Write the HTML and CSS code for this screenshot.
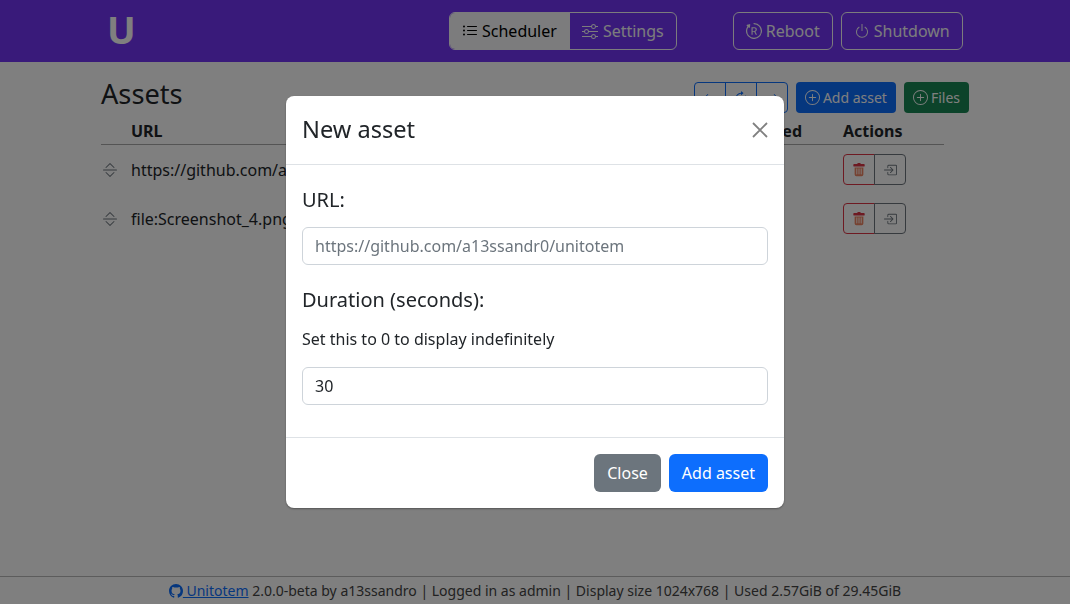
FILE: index.html
```html
<!DOCTYPE html>
<html lang="en">
<head>
<meta charset="utf-8">
<title>Unitotem</title>
<link rel="stylesheet" href="styles.css">
</head>
<body>
<nav class="navbar">
  <span class="logo">U</span>
  <div class="tabs">
    <a class="tab tab-active"><svg class="icon" viewBox="0 0 16 16"><path fill-rule="evenodd" d="M5 11.5a.5.5 0 0 1 .5-.5h9a.5.5 0 0 1 0 1h-9a.5.5 0 0 1-.5-.5zm0-4a.5.5 0 0 1 .5-.5h9a.5.5 0 0 1 0 1h-9a.5.5 0 0 1-.5-.5zm0-4a.5.5 0 0 1 .5-.5h9a.5.5 0 0 1 0 1h-9a.5.5 0 0 1-.5-.5zm-3 1a1 1 0 1 0 0-2 1 1 0 0 0 0 2zm0 4a1 1 0 1 0 0-2 1 1 0 0 0 0 2zm0 4a1 1 0 1 0 0-2 1 1 0 0 0 0 2z"/></svg>Scheduler</a>
    <a class="tab"><svg class="icon" viewBox="0 0 16 16"><path fill-rule="evenodd" d="M11.5 2a1.5 1.5 0 1 0 0 3 1.5 1.5 0 0 0 0-3zM9.05 3a2.5 2.5 0 0 1 4.9 0H16v1h-2.05a2.5 2.5 0 0 1-4.9 0H0V3h9.05zM4.5 7a1.5 1.5 0 1 0 0 3 1.5 1.5 0 0 0 0-3zM2.05 8a2.5 2.5 0 0 1 4.9 0H16v1H6.95a2.5 2.5 0 0 1-4.9 0H0V8h2.05zm9.45 4a1.5 1.5 0 1 0 0 3 1.5 1.5 0 0 0 0-3zm-2.45 1a2.5 2.5 0 0 1 4.9 0H16v1h-2.05a2.5 2.5 0 0 1-4.9 0H0v-1h9.05z"/></svg>Settings</a>
  </div>
  <div class="power">
    <a class="nav-btn"><svg class="icon" viewBox="0 0 16 16"><path d="M1.161 8a6.84 6.84 0 1 0 6.842-6.84.58.58 0 1 1 0-1.16 8 8 0 1 1-6.556 3.412l-.663-.577a.58.58 0 0 1 .227-.997l2.52-.69a.58.58 0 0 1 .728.633l-.332 2.592a.58.58 0 0 1-.956.364l-.643-.56A6.812 6.812 0 0 0 1.16 8z"/><path d="M6.641 11.671V8.843h1.57l1.498 2.828h1.314L9.377 8.665c.897-.3 1.427-1.106 1.427-2.1 0-1.37-.943-2.246-2.456-2.246H5.5v7.352h1.141zm0-3.75V5.277h1.57c.881 0 1.416.499 1.416 1.32 0 .84-.504 1.324-1.386 1.324h-1.6z"/></svg>Reboot</a>
    <a class="nav-btn"><svg class="icon" viewBox="0 0 16 16"><path d="M7.5 1v7h1V1h-1z"/><path d="M3 8.812a4.999 4.999 0 0 1 2.578-4.375l-.485-.874A6 6 0 1 0 11 3.616l-.501.865A5 5 0 1 1 3 8.812z"/></svg>Shutdown</a>
  </div>
</nav>

<main class="content">
  <header class="page-head">
    <h1 class="page-title">Assets</h1>
    <div class="toolbar">
      <div class="nav-group">
        <button class="group-cell"><svg class="icon" viewBox="0 0 16 16"><path fill-rule="evenodd" d="M15 8a.5.5 0 0 0-.5-.5H2.707l3.147-3.146a.5.5 0 1 0-.708-.708l-4 4a.5.5 0 0 0 0 .708l4 4a.5.5 0 0 0 .708-.708L2.707 8.5H14.5A.5.5 0 0 0 15 8z"/></svg></button>
        <button class="group-cell"><svg class="icon" viewBox="0 0 16 16"><path fill-rule="evenodd" d="M8 3a5 5 0 1 0 4.546 2.914.5.5 0 0 1 .908-.417A6 6 0 1 1 8 2v1z"/><path d="M8 4.466V.534a.25.25 0 0 1 .41-.192l2.36 1.966c.12.1.12.284 0 .384L8.41 4.658A.25.25 0 0 1 8 4.466z"/></svg></button>
        <button class="group-cell"><svg class="icon" viewBox="0 0 16 16"><path fill-rule="evenodd" d="M1 8a.5.5 0 0 1 .5-.5h11.793l-3.147-3.146a.5.5 0 0 1 .708-.708l4 4a.5.5 0 0 1 0 .708l-4 4a.5.5 0 0 1-.708-.708L13.293 8.5H1.5A.5.5 0 0 1 1 8z"/></svg></button>
      </div>
      <a class="solid-btn solid-blue"><svg class="icon" viewBox="0 0 16 16"><path d="M8 15A7 7 0 1 1 8 1a7 7 0 0 1 0 14zm0 1A8 8 0 1 0 8 0a8 8 0 0 0 0 16z"/><path d="M8 4a.5.5 0 0 1 .5.5v3h3a.5.5 0 0 1 0 1h-3v3a.5.5 0 0 1-1 0v-3h-3a.5.5 0 0 1 0-1h3v-3A.5.5 0 0 1 8 4z"/></svg>Add asset</a>
      <a class="solid-btn solid-green"><svg class="icon" viewBox="0 0 16 16"><path d="M8 15A7 7 0 1 1 8 1a7 7 0 0 1 0 14zm0 1A8 8 0 1 0 8 0a8 8 0 0 0 0 16z"/><path d="M8 4a.5.5 0 0 1 .5.5v3h3a.5.5 0 0 1 0 1h-3v3a.5.5 0 0 1-1 0v-3h-3a.5.5 0 0 1 0-1h3v-3A.5.5 0 0 1 8 4z"/></svg>Files</a>
    </div>
  </header>

  <section class="asset-table">
    <div class="asset-row asset-head">
      <span></span><span>URL</span><span class="col-state">Enabled</span><span>Actions</span>
    </div>
    <div class="asset-row">
      <svg class="icon handle" viewBox="0 0 16 16"><path fill-rule="evenodd" d="M3.646 10.146a.5.5 0 0 1 .708 0L8 13.793l3.646-3.647a.5.5 0 0 1 .708.708l-4 4a.5.5 0 0 1-.708 0l-4-4a.5.5 0 0 1 0-.708zm0-4.292a.5.5 0 0 0 .708 0L8 2.207l3.646 3.647a.5.5 0 0 0 .708-.708l-4-4a.5.5 0 0 0-.708 0l-4 4a.5.5 0 0 0 0 .708zM1 8a.5.5 0 0 1 .5-.5h13a.5.5 0 0 1 0 1h-13A.5.5 0 0 1 1 8z"/></svg>
      <span>https://github.com/a13ssandr0/unitotem</span><span></span>
      <div class="actions">
        <button class="action action-del"><svg class="icon" viewBox="0 0 16 16"><path d="M2.5 1a1 1 0 0 0-1 1v1a1 1 0 0 0 1 1h11a1 1 0 0 0 1-1V2a1 1 0 0 0-1-1H10a1 1 0 0 0-1-1H7a1 1 0 0 0-1 1H2.5z"/><path class="trash-body" d="M3 5v8a2 2 0 0 0 2 2h6a2 2 0 0 0 2-2V5H3zm2.5 1a.5.5 0 0 1 .5.5v6a.5.5 0 0 1-1 0v-6a.5.5 0 0 1 .5-.5zM8 6a.5.5 0 0 1 .5.5v6a.5.5 0 0 1-1 0v-6A.5.5 0 0 1 8 6zm3 .5v6a.5.5 0 0 1-1 0v-6a.5.5 0 0 1 1 0z"/></svg></button>
        <button class="action action-go"><svg class="icon" viewBox="0 0 16 16"><path fill-rule="evenodd" d="M6 3.5a.5.5 0 0 1 .5-.5h8a.5.5 0 0 1 .5.5v9a.5.5 0 0 1-.5.5h-8a.5.5 0 0 1-.5-.5v-2a.5.5 0 0 0-1 0v2A1.5 1.5 0 0 0 6.5 14h8a1.5 1.5 0 0 0 1.5-1.5v-9A1.5 1.5 0 0 0 14.5 2h-8A1.5 1.5 0 0 0 5 3.5v2a.5.5 0 0 0 1 0v-2z"/><path fill-rule="evenodd" d="M11.854 8.354a.5.5 0 0 0 0-.708l-3-3a.5.5 0 1 0-.708.708L10.293 7.5H1.5a.5.5 0 0 0 0 1h8.793l-2.147 2.146a.5.5 0 0 0 .708.708l3-3z"/></svg></button>
      </div>
    </div>
    <div class="asset-row">
      <svg class="icon handle" viewBox="0 0 16 16"><path fill-rule="evenodd" d="M3.646 10.146a.5.5 0 0 1 .708 0L8 13.793l3.646-3.647a.5.5 0 0 1 .708.708l-4 4a.5.5 0 0 1-.708 0l-4-4a.5.5 0 0 1 0-.708zm0-4.292a.5.5 0 0 0 .708 0L8 2.207l3.646 3.647a.5.5 0 0 0 .708-.708l-4-4a.5.5 0 0 0-.708 0l-4 4a.5.5 0 0 0 0 .708zM1 8a.5.5 0 0 1 .5-.5h13a.5.5 0 0 1 0 1h-13A.5.5 0 0 1 1 8z"/></svg>
      <span>file:Screenshot_4.png</span><span></span>
      <div class="actions">
        <button class="action action-del"><svg class="icon" viewBox="0 0 16 16"><path d="M2.5 1a1 1 0 0 0-1 1v1a1 1 0 0 0 1 1h11a1 1 0 0 0 1-1V2a1 1 0 0 0-1-1H10a1 1 0 0 0-1-1H7a1 1 0 0 0-1 1H2.5z"/><path class="trash-body" d="M3 5v8a2 2 0 0 0 2 2h6a2 2 0 0 0 2-2V5H3zm2.5 1a.5.5 0 0 1 .5.5v6a.5.5 0 0 1-1 0v-6a.5.5 0 0 1 .5-.5zM8 6a.5.5 0 0 1 .5.5v6a.5.5 0 0 1-1 0v-6A.5.5 0 0 1 8 6zm3 .5v6a.5.5 0 0 1-1 0v-6a.5.5 0 0 1 1 0z"/></svg></button>
        <button class="action action-go"><svg class="icon" viewBox="0 0 16 16"><path fill-rule="evenodd" d="M6 3.5a.5.5 0 0 1 .5-.5h8a.5.5 0 0 1 .5.5v9a.5.5 0 0 1-.5.5h-8a.5.5 0 0 1-.5-.5v-2a.5.5 0 0 0-1 0v2A1.5 1.5 0 0 0 6.5 14h8a1.5 1.5 0 0 0 1.5-1.5v-9A1.5 1.5 0 0 0 14.5 2h-8A1.5 1.5 0 0 0 5 3.5v2a.5.5 0 0 0 1 0v-2z"/><path fill-rule="evenodd" d="M11.854 8.354a.5.5 0 0 0 0-.708l-3-3a.5.5 0 1 0-.708.708L10.293 7.5H1.5a.5.5 0 0 0 0 1h8.793l-2.147 2.146a.5.5 0 0 0 .708.708l3-3z"/></svg></button>
      </div>
    </div>
  </section>
</main>

<footer class="footer">
  <a class="footer-link"><svg class="icon" viewBox="0 0 16 16"><path d="M8 0C3.58 0 0 3.58 0 8c0 3.54 2.29 6.53 5.47 7.59.4.07.55-.17.55-.38 0-.19-.01-.82-.01-1.49-2.01.37-2.53-.49-2.69-.94-.09-.23-.48-.94-.82-1.13-.28-.15-.68-.52-.01-.53.63-.01 1.08.58 1.23.82.72 1.21 1.87.87 2.33.66.07-.52.28-.87.51-1.07-1.78-.2-3.64-.89-3.64-3.95 0-.87.31-1.59.82-2.15-.08-.2-.36-1.02.08-2.12 0 0 .67-.21 2.2.82.64-.18 1.32-.27 2-.27.68 0 1.36.09 2 .27 1.53-1.04 2.2-.82 2.2-.82.44 1.1.16 1.92.08 2.12.51.56.82 1.28.82 2.15 0 3.07-1.87 3.75-3.65 3.95.29.25.54.73.54 1.48 0 1.07-.01 1.93-.01 2.2 0 .21.15.46.55.38A8.013 8.013 0 0 0 16 8c0-4.42-3.58-8-8-8z"/></svg> Unitotem</a> 2.0.0-beta by a13ssandro | Logged in as admin | Display size 1024x768 | Used 2.57GiB of 29.45GiB
</footer>

<div class="backdrop">
  <div class="modal">
    <div class="modal-header">
      <h5 class="modal-title">New asset</h5>
      <svg class="modal-close" viewBox="0 0 16 16"><path d="M1 1l14 14M15 1L1 15"/></svg>
    </div>
    <div class="modal-body">
      <label class="field-label">URL:</label>
      <input class="field-input field-url" type="text" placeholder="https://github.com/a13ssandr0/unitotem">
      <label class="field-label field-label-next">Duration (seconds):</label>
      <p class="field-help">Set this to 0 to display indefinitely</p>
      <input class="field-input" type="text" value="30">
    </div>
    <div class="modal-footer">
      <button class="modal-btn modal-btn-close">Close</button>
      <button class="modal-btn modal-btn-add">Add asset</button>
    </div>
  </div>
</div>
</body>
</html>
```

FILE: styles.css
```css
* { box-sizing: border-box; }

html, body { height: 100%; }

body {
  margin: 0;
  height: 604px;
  display: flex;
  flex-direction: column;
  overflow: hidden;
  background: #fff;
  color: #212529;
  font: 16px/1.5 "Noto Sans", sans-serif;
}

.icon { width: 1em; height: 1em; fill: currentColor; flex: none; }

/* navbar */
.navbar {
  height: 62px;
  flex: none;
  display: flex;
  align-items: center;
  padding-left: 107px;
  background: #7234f5;
  color: #f8f9fa;
}

.logo {
  width: 342px;
  padding-bottom: 4px;
  font-size: 38px;
  font-weight: 700;
  line-height: 1;
  color: #fff;
}

.tabs {
  display: flex;
  height: 38px;
  border: 1px solid #f8f9fa;
  border-radius: 6px;
  overflow: hidden;
}

.tab {
  display: flex;
  align-items: center;
  gap: 5px;
  padding: 0 12px;
  color: #f8f9fa;
}

.tab-active {
  gap: 4px;
  padding: 0 13px 0 12px;
  background: #f8f9fa;
  color: #000;
}

.power { display: flex; gap: 8px; margin-left: 56px; }

.nav-btn {
  display: flex;
  align-items: center;
  gap: 4px;
  height: 38px;
  padding: 0 12px;
  border: 1px solid #f8f9fa;
  border-radius: 6px;
}

/* content */
.content {
  flex: 1;
  padding: 20px 101px 0;
}

.page-head {
  display: flex;
  justify-content: space-between;
  align-items: flex-start;
  height: 37px;
}

.page-title {
  margin: 0;
  font-size: 27.2px;
  font-weight: 400;
  line-height: 24px;
}

.toolbar { display: flex; gap: 8px; font-size: 14px; }

.nav-group {
  display: flex;
  width: 94px;
  height: 31px;
  border: 1px solid #0d6efd;
  border-radius: 4px;
}

.group-cell {
  flex: 1;
  padding: 0;
  border: 0;
  border-left: 1px solid #0d6efd;
  background: none;
  color: #0d6efd;
  font-size: 14px;
  display: flex;
  align-items: center;
  justify-content: center;
}

.group-cell:first-child { border-left: 0; }

.solid-btn {
  display: flex;
  align-items: center;
  gap: 3px;
  height: 31px;
  padding: 0 9px;
  border-radius: 4px;
  color: #fff;
}

.solid-btn .icon { font-size: 15px; }
.solid-blue { background: #0d6efd; }
.solid-green { background: #198754; }

.asset-table { width: 843px; }

.asset-row {
  display: grid;
  grid-template-columns: 30px 1fr auto 101px;
  align-items: center;
  height: 49px;
}

.asset-head {
  height: 26px;
  padding-bottom: 1px;
  font-weight: 700;
  border-bottom: 1px solid #a8a8a8;
}

.col-state { margin-right: 41px; }

.handle { color: #6c757d; margin-left: 1px; }

.actions { display: flex; width: 63px; }

.action {
  width: 32px;
  height: 31px;
  padding: 0;
  background: none;
  border: 1px solid #dc3545;
  border-radius: 4px 0 0 4px;
  color: #dc3545;
  font-size: 14px;
  display: flex;
  align-items: center;
  justify-content: center;
}

.trash-body { fill: #e8663c; opacity: .8; }

.action-go {
  margin-left: -1px;
  border-color: #6c757d;
  border-radius: 0 4px 4px 0;
  color: #6c757d;
}

/* footer */
.footer {
  flex: none;
  height: 28px;
  border-top: 1px solid #b9b9b9;
  text-align: center;
  font-size: 14px;
  line-height: 28px;
  color: #444;
}

.footer-link { color: #0d6efd; text-decoration: underline; }
.footer-link .icon { vertical-align: -2px; }

/* modal */
.backdrop {
  position: fixed;
  inset: 0;
  display: flex;
  justify-content: center;
  align-items: flex-start;
  padding-top: 96px;
  background: rgba(0, 0, 0, .5);
}

.modal {
  width: 498px;
  background: #fff;
  border-radius: 8px;
  box-shadow: 0 1px 2px rgba(0, 0, 0, .35);
}

.modal-header {
  display: flex;
  justify-content: space-between;
  align-items: center;
  height: 69px;
  padding: 0 16px;
  border-bottom: 1px solid #dee2e6;
}

.modal-title {
  margin: 0;
  font-size: 23.6px;
  font-weight: 400;
  line-height: 1.5;
}

.modal-close {
  width: 16px;
  height: 16px;
  fill: none;
  stroke: #808080;
  stroke-width: 1.8;
  overflow: visible;
}

.modal-body {
  padding: 20px 16px 32px;
  display: flex;
  flex-direction: column;
}

.field-label { font-size: 20px; line-height: 30px; margin-bottom: 12px; }
.field-label-next { margin-top: 20px; }
.field-help { margin: 0 0 16px; line-height: 24px; }

.field-input {
  width: 100%;
  height: 38px;
  padding: 6px 12px;
  border: 1px solid #ced4da;
  border-radius: 6px;
  font: inherit;
  color: #212529;
  outline: none;
}

.field-input::placeholder { color: #6c757d; opacity: 1; }

.modal-footer {
  display: flex;
  justify-content: flex-end;
  gap: 8px;
  padding: 16px;
  border-top: 1px solid #dee2e6;
}

.modal-btn {
  height: 38px;
  padding: 0 13px;
  border: 0;
  border-radius: 6px;
  color: #fff;
  font: inherit;
}

.modal-btn-close { background: #6c757d; }
.modal-btn-add { background: #0d6efd; }
```
